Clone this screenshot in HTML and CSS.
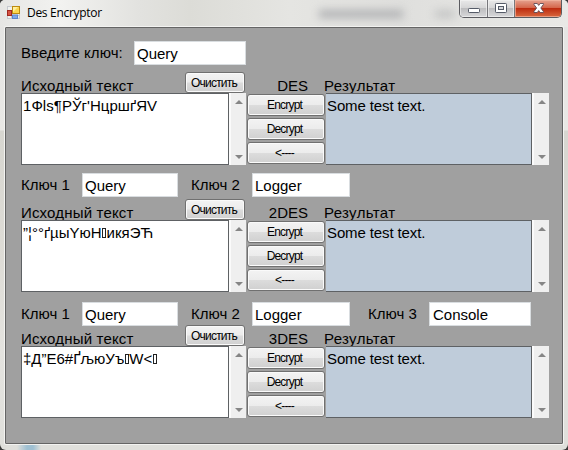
FILE: index.html
```
<!DOCTYPE html>
<html lang="ru">
<head>
<meta charset="utf-8">
<title>Des Encryptor</title>
<link rel="stylesheet" href="styles.css">
</head>
<body>
<div class="window">
  <header class="titlebar">
    <svg class="app-icon" width="14" height="14" viewBox="0 0 14 14">
      <rect x=".5" y=".5" width="12" height="12" fill="#f1f1ee" stroke="#c6c9cf"/>
      <path d="M.5 9.5h12M4.5 9v4M9.500 9v4" stroke="#c6c9cf"/>
      <rect x=".5" y="4.500" width="4" height="5" fill="#d65343" stroke="#a12820"/>
      <rect x="5.500" y=".5" width="7" height="7" fill="#fbd64f" stroke="#bd8b10"/>
      <path d="M6 1h5L6 6z" fill="#fff0a0"/>
      <rect x="5.500" y="9" width="5" height="3.500" fill="#7fa9e8" stroke="#5d86cc"/>
    </svg>
    <span class="title">Des Encryptor</span>
    <div class="ghost"><i class="ghost-a"></i><i class="ghost-b"></i></div>
    <div class="controls">
      <span class="ctl min"><svg width="27" height="17" viewBox="0 0 27 17"><rect x="8.500" y="8.500" width="11" height="4" rx=".8" fill="#fff" stroke="#555b68"/></svg></span>
      <span class="ctl max"><svg width="27" height="17" viewBox="0 0 27 17"><rect x="7.500" y="3.500" width="11" height="9" rx=".8" fill="#fff" stroke="#555b68"/><rect x="10.500" y="6.500" width="5" height="3" fill="#d5d7da" stroke="#555b68"/></svg></span>
      <span class="ctl close"><svg width="47" height="17" viewBox="0 0 47 17"><path d="M19 3.500h3.300l1.400 1.900 1.400-1.900h3.300v1L25.800 8l2.600 3.500v1h-3.300l-1.400-1.900-1.400 1.900H19v-1L21.600 8 19 4.500z" fill="#fff" stroke="#5f4b55" stroke-width=".9"/></svg></span>
    </div>
  </header>
  <main class="client">
    <section class="cipher des">
      <div class="keys"><label class="wide">Введите ключ:</label><span class="field f1">Query</span></div>
      <div class="head"><span class="src">Исходный текст</span><button class="clear">Очистить</button><span class="name">DES</span><span class="res">Результат</span></div>
      <div class="body">
        <div class="text source"><span class="t1">1Фls¶РЎг'НцршґЯV</span></div>
        <div class="scroll"><i class="up"></i><i class="down"></i></div>
        <div class="actions"><button>Encrypt</button><button>Decrypt</button><button>&lt;----</button></div>
        <div class="text result"><span>Some test text.</span></div>
        <div class="scroll"><i class="up"></i><i class="down"></i></div>
      </div>
    </section>
    <section class="cipher des2">
      <div class="keys"><label>Ключ 1</label><span class="field f2">Query</span><label class="second">Ключ 2</label><span class="field f3">Logger</span></div>
      <div class="head"><span class="src">Исходный текст</span><button class="clear">Очистить</button><span class="name">2DES</span><span class="res">Результат</span></div>
      <div class="body">
        <div class="text source"><span class="t2">”¦°°ґµыYюН<i class="box"></i>икяЭЋ</span></div>
        <div class="scroll"><i class="up"></i><i class="down"></i></div>
        <div class="actions"><button>Encrypt</button><button>Decrypt</button><button>&lt;----</button></div>
        <div class="text result"><span>Some test text.</span></div>
        <div class="scroll"><i class="up"></i><i class="down"></i></div>
      </div>
    </section>
    <section class="cipher des3">
      <div class="keys"><label>Ключ 1</label><span class="field f2">Query</span><label class="second">Ключ 2</label><span class="field f3">Logger</span><label class="third">Ключ 3</label><span class="field f4">Console</span></div>
      <div class="head"><span class="src">Исходный текст</span><button class="clear">Очистить</button><span class="name">3DES</span><span class="res">Результат</span></div>
      <div class="body">
        <div class="text source"><span class="t3">‡Д”Е6#ҐљюУъ<i class="box"></i>W&lt;<i class="box"></i></span></div>
        <div class="scroll"><i class="up"></i><i class="down"></i></div>
        <div class="actions"><button>Encrypt</button><button>Decrypt</button><button>&lt;----</button></div>
        <div class="text result"><span>Some test text.</span></div>
        <div class="scroll"><i class="up"></i><i class="down"></i></div>
      </div>
    </section>
  </main>
  <footer class="frame-bottom"></footer>
</div>
</body>
</html>
```
FILE: styles.css
```
* { box-sizing: border-box; }
body { margin: 0; background: #3a3a3a; font-family: "Liberation Sans", Arial, sans-serif; color: #000; }
.window {
  width: 568px; height: 450px; padding: 0 5px;
  display: flex; flex-direction: column;
  border-radius: 5px 5px 6px 6px; overflow: hidden;
  background: linear-gradient(#e4e4e3 0, #e9e8e5 130px, #d7d6d0 131px, #dedcd6 260px, #e4e3df 350px, #dfdfdb 450px);
}
.titlebar { height: 27px; flex: none; display: flex; align-items: flex-start; margin: 0 -5px; padding: 0 6px 0 7px; background: linear-gradient(90deg, #e6e6e4 0, #f2f2f0 60px, #e2e2df 140px, #dcdcd7 190px, #e5e5e2 290px, #dfdfdd 400px, #e9e9e6 568px); }
.app-icon { margin-top: 6px; flex: none; }
.title { margin-left: 6px; width: 90px; font: 12px/16px "Open Sans", sans-serif; margin-top: 5px; letter-spacing: -.3px; white-space: nowrap; }
.ghost { flex: 1; display: flex; gap: 32px; padding: 10px 0 0 202px; filter: blur(4px); overflow: hidden; }
.ghost i { height: 8px; background: #b1b2b4; flex: none; }
.ghost-a { width: 84px; }
.ghost-b { width: 20px; opacity: .6; }
.controls { display: flex; flex: none; width: 103px; height: 18px; overflow: hidden; border: 1px solid #5b5b60; border-top: 0; border-radius: 0 0 5px 5px; }
.ctl { height: 17px; background: linear-gradient(#e9e9e9, #d6d6d7 45%, #bdbdbf 50%, #d8d8da); box-shadow: inset 0 0 0 1px #f3f3f3aa; }
.ctl svg { display: block; }
.min { width: 28px; flex: none; border-right: 1px solid #77777b; }
.max { width: 27px; flex: none; border-right: 1px solid #77777b; }
.close { flex: 1; background: linear-gradient(#e5a28f, #d5674c 45%, #bd2c10 50%, #d9683e); box-shadow: inset 0 0 0 1px #f4b8a3aa; }
.client { height: 417px; flex: none; width: 558px; background: #a0a0a0; border: 1px solid #656565; box-shadow: 0 0 0 1px #f3f3f1; padding: 13px 0 0 15px; border-radius: 1px; }
.cipher { width: 528px; font-size: 15px; line-height: 18px; }
.des2 { margin-top: 8px; }
.des3 { margin-top: 10px; }
.keys { display: flex; height: 24px; align-items: center; white-space: nowrap; }
.keys label { width: 61px; }
.keys .wide { width: 113px; letter-spacing: .1px; }
.keys .second { margin-left: 13px; }
.keys .third { margin-left: 18px; }
.field { height: 24px; background: #fff; border: 1px solid #d9dde0; padding: 3px 0 0 2px; }
.f1 { width: 112px; }
.f2 { width: 96px; }
.f3 { width: 98px; }
.f4 { width: 102px; padding-left: 3px; }
.head { display: flex; align-items: flex-end; height: 28px; white-space: nowrap; }
.des2 .head { height: 23px; }
.des3 .head { height: 20px; }
.src { width: 164px; margin-bottom: -2px; letter-spacing: .17px; }
.name { width: 63px; text-align: right; margin-bottom: -2px; }
.res { margin-left: 16px; margin-bottom: -2px; letter-spacing: .35px; }
button { font: 12px/14px "Liberation Sans", Arial, sans-serif; letter-spacing: -.8px; color: #000; padding: 0; border: 1px solid #707070; border-radius: 3px; background: linear-gradient(#f3f3f3, #ececec 48%, #dcdcdc 52%, #d0d0d0); box-shadow: inset 0 0 0 1px #fafafa; }
.clear { width: 60px; height: 21px; flex: none; padding-right: 2px; }
.body { display: flex; height: 72px; }
.text { height: 72px; border: 1px solid #5e6164; padding: 3px 0 0 1px; white-space: nowrap; flex: none; position: relative; }
.source { width: 208px; background: #fff; }
.result { width: 206px; background: #bfccda; border-left-width: 0; letter-spacing: -.12px; }
.scroll { width: 17px; height: 72px; flex: none; background: #efefef; border-left: 2px solid #fbfbfb; display: flex; flex-direction: column; justify-content: space-between; align-items: center; padding: 7px 0 6px; }
.up, .down { border: 4px solid transparent; border-top-width: 0; border-bottom: 4px solid #858585; }
.down { border-bottom-width: 0; border-top: 4px solid #858585; }
.actions { width: 80px; flex: none; display: flex; flex-direction: column; gap: 2px; padding: 1px 1px 0; }
.actions button { width: 78px; height: 22px; padding-right: 3px; }
.t1 { letter-spacing: .05px; }
.box { display: inline-block; width: 4px; height: 10px; border: 1px solid #222; margin: 0 .5px; }
.frame-bottom { flex: 1; margin: 1px 0 0; background: linear-gradient(90deg, transparent 12px, #9fc0d2 22px 28px, transparent 36px); }
```
